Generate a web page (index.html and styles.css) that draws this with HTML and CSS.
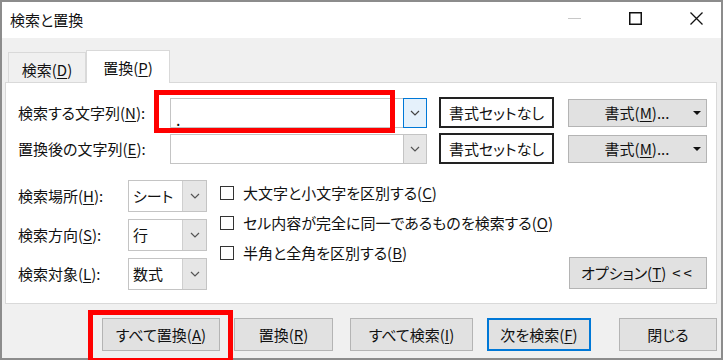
FILE: index.html
```html
<!DOCTYPE html>
<html lang="ja">
<head>
<meta charset="utf-8">
<title>検索と置換</title>
<link rel="stylesheet" href="styles.css">
</head>
<body>
<div class="dialog">
  <div class="titlebar">
    <span class="title">検索と置換</span>
    <div class="controls">
      <svg class="ctl" viewBox="0 0 13 13"><line x1="0" y1="6.5" x2="13" y2="6.5" stroke="#c8c8c8" stroke-width="1"/></svg>
      <svg class="ctl" viewBox="0 0 13 13"><rect x="0.75" y="0.75" width="11.5" height="11.5" fill="none" stroke="#111" stroke-width="1.5"/></svg>
      <svg class="ctl" viewBox="0 0 13 13"><path d="M0.5 0.5 L12.5 12.5 M12.5 0.5 L0.5 12.5" stroke="#111" stroke-width="1.3"/></svg>
    </div>
  </div>
  <div class="body">
    <div class="tabs">
      <div class="tab">検索(<u>D</u>)</div>
      <div class="tab active">置換(<u>P</u>)</div>
    </div>
    <div class="panel">
      <div class="row">
        <span class="label1">検索する文字列(<u>N</u>):</span>
        <div class="combo">
          <div class="combo-text">.</div>
          <div class="combo-dd focus"><svg width="10" height="6" viewBox="0 0 10 6"><polyline points="1,1 5,5 9,1" fill="none" stroke="#444" stroke-width="1.2"/></svg></div>
        </div>
        <div class="fmt-clear">書式セットなし</div>
        <div class="fmt"><span class="fmt-text">書式(<u>M</u>)...</span><svg width="8" height="4" viewBox="0 0 8 4"><polygon points="0,0 8,0 4,4" fill="#111"/></svg></div>
      </div>
      <div class="row row2">
        <span class="label1">置換後の文字列(<u>E</u>):</span>
        <div class="combo">
          <div class="combo-text"></div>
          <div class="combo-dd"><svg width="10" height="6" viewBox="0 0 10 6"><polyline points="1,1 5,5 9,1" fill="none" stroke="#555" stroke-width="1.2"/></svg></div>
        </div>
        <div class="fmt-clear">書式セットなし</div>
        <div class="fmt"><span class="fmt-text">書式(<u>M</u>)...</span><svg width="8" height="4" viewBox="0 0 8 4"><polygon points="0,0 8,0 4,4" fill="#111"/></svg></div>
      </div>
      <div class="lower">
        <div class="selects">
          <span class="label2">検索場所(<u>H</u>):</span>
          <div class="sel"><span class="sel-text">シート</span><span class="sel-dd"><svg width="10" height="6" viewBox="0 0 10 6"><polyline points="1,1 5,5 9,1" fill="none" stroke="#555" stroke-width="1.2"/></svg></span></div>
          <span class="label2">検索方向(<u>S</u>):</span>
          <div class="sel"><span class="sel-text">行</span><span class="sel-dd"><svg width="10" height="6" viewBox="0 0 10 6"><polyline points="1,1 5,5 9,1" fill="none" stroke="#555" stroke-width="1.2"/></svg></span></div>
          <span class="label2">検索対象(<u>L</u>):</span>
          <div class="sel"><span class="sel-text">数式</span><span class="sel-dd"><svg width="10" height="6" viewBox="0 0 10 6"><polyline points="1,1 5,5 9,1" fill="none" stroke="#555" stroke-width="1.2"/></svg></span></div>
        </div>
        <div class="checks">
          <div class="check"><span class="box"></span>大文字と小文字を区別する(<u>C</u>)</div>
          <div class="check"><span class="box"></span>セル内容が完全に同一であるものを検索する(<u>O</u>)</div>
          <div class="check"><span class="box"></span>半角と全角を区別する(<u>B</u>)</div>
        </div>
        <div class="opt-btn">オプション(<u>T</u>) <span class="lt">&lt;&lt;</span></div>
      </div>
    </div>
    <div class="buttons">
      <div class="btn b1">すべて置換(<u>A</u>)</div>
      <div class="btn b2">置換(<u>R</u>)</div>
      <div class="btn b3">すべて検索(<u>I</u>)</div>
      <div class="btn b4 default">次を検索(<u>F</u>)</div>
      <div class="btn b5">閉じる</div>
    </div>
  </div>
  <div class="hl hl1"></div>
  <div class="hl hl2"></div>
</div>
</body>
</html>
```
FILE: styles.css
```css
* { box-sizing: border-box; margin: 0; padding: 0; }
html, body { background: #fff; }
body {
  margin: 0;
  font-family: "Noto Sans CJK JP", "Noto Sans CJK SC", sans-serif;
  font-size: 15px;
  color: #111;
  font-feature-settings: "palt";
  line-height: 1.2;
}
u { text-decoration-thickness: 1px; text-underline-offset: 2px; }

.dialog {
  position: relative;
  width: 723px;
  height: 360px;
  border: 2px solid #8c8c8c;
  display: flex;
  flex-direction: column;
  background: #f0f0f0;
}
.titlebar {
  height: 36px;
  background: #fff;
  display: flex;
  justify-content: space-between;
  flex-shrink: 0;
}
.title { padding-left: 8px; line-height: 36px; }
.controls { display: flex; gap: 48px; padding: 10px 18px 0 0; }
.ctl { width: 13px; height: 13px; display: block; }

.body { flex: 1; display: flex; flex-direction: column; }
.tabs { display: flex; align-items: flex-end; height: 44px; padding-left: 6px; flex-shrink: 0; }
.tab {
  height: 30px;
  width: 78px;
  border: 1px solid #d9d9d9;
  border-bottom: none;
  display: flex;
  align-items: center;
  justify-content: center;
  padding-top: 4px;
}
.tab.active {
  height: 33px;
  width: 84px;
  background: #fff;
  margin-bottom: -1px;
  position: relative;
  z-index: 1;
  padding-top: 2px;
}

.panel {
  margin-left: 3px;
  width: 712px;
  height: 222px;
  flex-shrink: 0;
  border: 1px solid #d9d9d9;
  background: #fff;
  padding: 14px 9px 0 12px;
}
.row { display: flex; align-items: center; height: 31px; }
.row2 { margin-top: 5px; }
.label1 { width: 152px; }
.combo { width: 257px; height: 30px; display: flex; }
.combo-text {
  flex: 1;
  border: 1px solid #c4c4c4;
  border-right: none;
  padding: 10px 0 0 5px;
  font-size: 16px;
  line-height: 20px;
}
.combo-dd {
  width: 24px;
  border: 1px solid #c4c4c4;
  background: #e6e6e6;
  display: flex;
  align-items: center;
  justify-content: center;
}
.combo-dd.focus { border-color: #0078d7; background: #e5f1fb; }
.fmt-clear {
  margin-left: 12px;
  width: 115px;
  height: 31px;
  border: 2px solid #222;
  background: #fff;
  display: flex;
  align-items: center;
  justify-content: center;
}
.fmt {
  margin-left: 14px;
  width: 139px;
  height: 28px;
  background: #e1e1e1;
  border: 1px solid #b4b4b4;
  display: flex;
  align-items: center;
  padding: 0 5px 0 12px;
}
.fmt-text { flex: 1; text-align: center; }
.fmt svg { display: block; }

.lower { margin-top: 14px; display: flex; align-items: flex-start; height: 112px; }
.selects {
  display: grid;
  grid-template-columns: 110px 79px;
  grid-auto-rows: 32px;
  row-gap: 7px;
  margin-top: 2px;
  align-items: center;
}
.sel { height: 32px; display: flex; border: 1px solid #c4c4c4; background: #fff; }
.sel-text { flex: 1; padding-left: 4px; display: flex; align-items: center; }
.sel-dd {
  width: 24px;
  background: #e6e6e6;
  border-left: 1px solid #cfcfcf;
  display: flex;
  align-items: center;
  justify-content: center;
}
.checks { margin-left: 13px; display: flex; flex-direction: column; }
.check { height: 30px; display: flex; align-items: center; }
.box { width: 14px; height: 14px; border: 1px solid #333; background: #fff; margin-right: 9px; }
.opt-btn {
  margin-left: auto;
  align-self: flex-end;
  margin-bottom: 1px;
  width: 138px;
  height: 32px;
  background: #e1e1e1;
  border: 1px solid #b4b4b4;
  display: flex;
  align-items: center;
  justify-content: center;
}
.lt { letter-spacing: 3px; margin-left: 6px; }

.buttons { margin-top: 14px; display: flex; height: 33px; padding-left: 100px; }
.btn {
  height: 33px;
  background: #e1e1e1;
  border: 1px solid #b4b4b4;
  display: flex;
  align-items: center;
  justify-content: center;
}
.btn.default { border: 2px solid #0078d7; }
.b1 { width: 118px; }
.b2 { width: 99px; margin-left: 14px; }
.b3 { width: 123px; margin-left: 17px; }
.b4 { width: 104px; margin-left: 14px; }
.b5 { width: 98px; margin-left: 28px; }

.hl { position: absolute; border: 5px solid #ff0000; z-index: 5; }
.hl1 { left: 152px; top: 88px; width: 241px; height: 43px; }
.hl2 { left: 86px; top: 308px; width: 145px; height: 53px; }
```
